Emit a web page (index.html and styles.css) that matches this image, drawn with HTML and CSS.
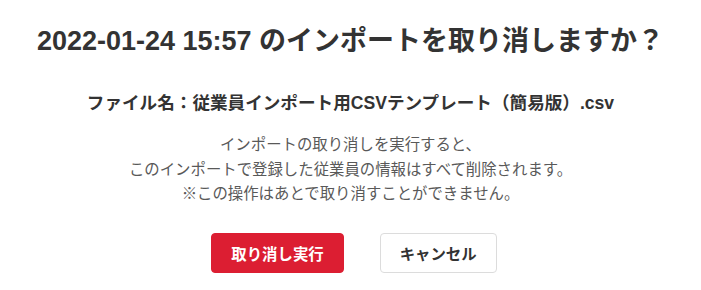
FILE: index.html
```html
<!DOCTYPE html>
<html lang="ja">
<head>
<meta charset="utf-8">
<link rel="stylesheet" href="styles.css">
</head>
<body>
<div class="dialog">
  <h1 class="title">2022-01-24 15:57 のインポートを取り消しますか？</h1>
  <p class="filename">ファイル名：従業員インポート用CSVテンプレート（簡易版）.csv</p>
  <p class="message">インポートの取り消しを実行すると、<br>このインポートで登録した従業員の情報はすべて削除されます。<br>※この操作はあとで取り消すことができません。</p>
  <div class="actions">
    <button class="btn btn-danger" type="button">取り消し実行</button>
    <button class="btn btn-cancel" type="button">キャンセル</button>
  </div>
</div>
</body>
</html>
```
FILE: styles.css
```css
html, body {
  margin: 0;
  padding: 0;
  background: #ffffff;
}
body {
  font-family: "Liberation Sans", "Noto Sans CJK JP", sans-serif;
  color: #333333;
}
.dialog {
  width: 701px;
  padding-top: 21px;
  display: flex;
  flex-direction: column;
  align-items: center;
  text-align: center;
}
.title {
  margin: 0;
  font-size: 27px;
  line-height: 40px;
  font-weight: 700;
  color: #333333;
}
.filename {
  margin: 29px 0 0;
  font-size: 17.6px;
  line-height: 26px;
  font-weight: 700;
  color: #333333;
}
.message {
  margin: 17px 0 0;
  font-size: 15.4px;
  line-height: 24.5px;
  font-weight: 400;
  color: #595959;
}
.actions {
  margin-top: 26px;
  padding-left: 7px;
  display: flex;
  gap: 36px;
  justify-content: center;
}
.btn {
  height: 40px;
  padding: 0 19px;
  border-radius: 4px;
  font-family: "Liberation Sans", "Noto Sans CJK JP", sans-serif;
  font-size: 15.4px;
  font-weight: 700;
  cursor: pointer;
}
.btn-danger {
  background: #dc1e32;
  border: 1px solid #dc1e32;
  color: #ffffff;
}
.btn-cancel {
  background: #ffffff;
  border: 1px solid #dcdcdc;
  color: #333333;
}
```
